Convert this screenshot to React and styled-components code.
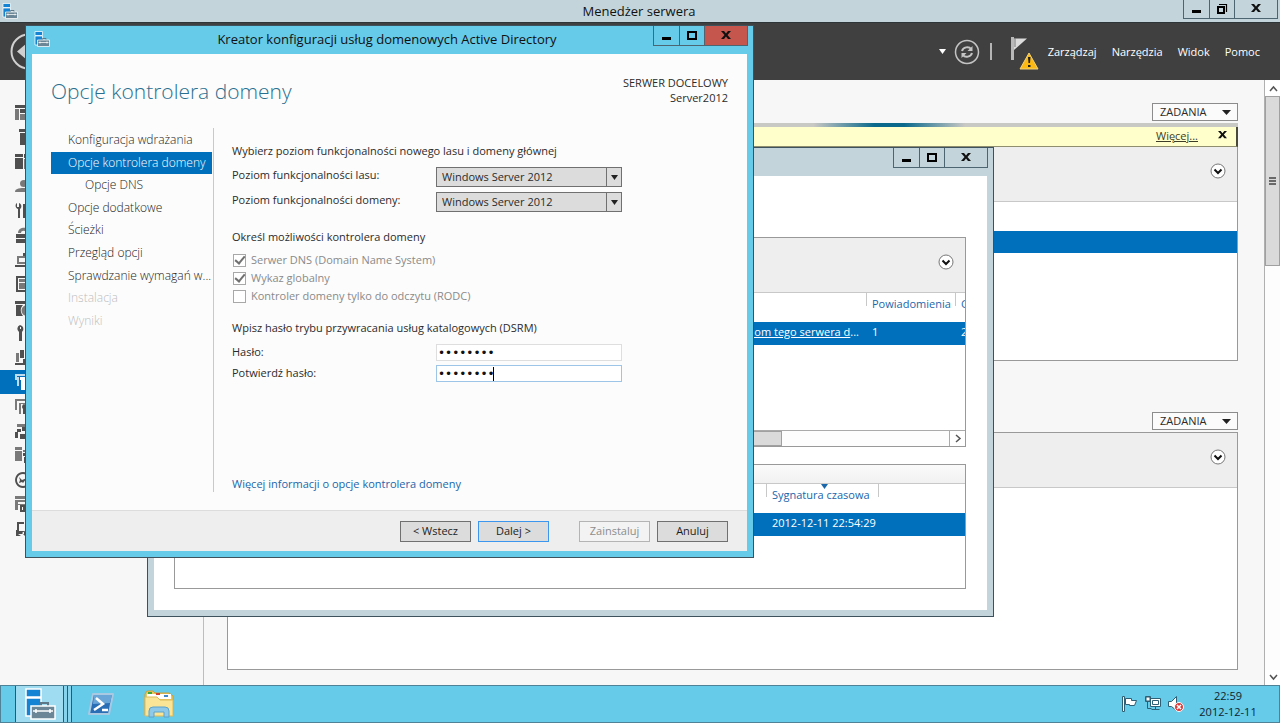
import React from "react"
import styled, { createGlobalStyle, css } from "styled-components"

const GlobalStyle = createGlobalStyle`
  * {
    box-sizing: border-box;
  }
  body {
    margin: 0;
    font-family: "Open Sans", "Noto Sans", sans-serif;
    font-size: 11px;
    line-height: 16px;
    color: #2b2b2b;
    overflow: hidden;
  }
  button, input, select {
    font: inherit;
    color: inherit;
    margin: 0;
  }
  h1, h2, p, ul {
    margin: 0;
    padding: 0;
    font-weight: 400;
  }
`

const Desktop = styled.div`
  position: relative;
  height: 100vh;
  display: flex;
  flex-direction: column;
  overflow: hidden;
  background: #f7f7f7;
`

const Manager = styled.main`
  flex: 1;
  min-height: 0;
  display: flex;
  flex-direction: column;
`

const TitleBar = styled.header`
  display: grid;
  grid-template-columns: 1fr auto 1fr;
  align-items: start;
  flex: none;
  height: ${props => props.$height};
  padding-right: ${props => props.$right || "0"};
  background: ${props => props.$color};
`

const TitleText = styled.h1`
  font-size: 13px;
  line-height: ${props => props.$line || "22px"};
  color: #111;
`

const TitleIcon = styled.span`
  padding: ${props => props.$pad};
  line-height: 0;
`

const Controls = styled.div`
  justify-self: end;
  display: flex;
  height: ${props => props.$height || "20px"};
  border: 1px solid #4c6570;
  border-top: 0;
`

const ControlButton = styled.button`
  width: ${props => (props.$wide ? "43px" : "25px")};
  padding: 0;
  border: 0;
  border-left: 1px solid #4c6570;
  background: ${props => props.$color || "transparent"};
  line-height: 0;
  &:first-child {
    border-left: 0;
  }
`

const Toolbar = styled.div`
  flex: none;
  height: 58px;
  display: flex;
  align-items: center;
  justify-content: space-between;
  padding: 0 20px 0 10px;
  background: #404040;
  border-top: 1px solid #2e3538;
`

const ToolbarGroup = styled.div`
  display: flex;
  align-items: center;
  gap: 9px;
`

const Menu = styled.nav`
  display: flex;
  gap: 15px;
`

const ToolbarIcons = styled.div`
  display: flex;
  align-items: center;
  height: 58px;
`

const IconButton = styled.button`
  padding: 0;
  border: 0;
  background: none;
  line-height: 0;
  margin-left: ${props => props.$gap || "0"};
`

const Divider = styled.span`
  width: 2px;
  height: 17px;
  margin-left: 10px;
  background: #b5b5b5;
`

const MenuLink = styled.a`
  color: #fff;
  font-weight: 500;
  text-decoration: none;
`

const Body = styled.div`
  flex: 1;
  min-height: 0;
  display: flex;
`

const Sidebar = styled.nav`
  flex: none;
  width: 204px;
  padding-top: 20px;
  border-right: 1px solid #bdbdbd;
`

const SideList = styled.ul`
  display: grid;
  grid-template-rows: repeat(18, 1fr);
  height: 441px;
  list-style: none;
`

const SideItem = styled.li`
  display: flex;
  align-items: center;
  padding-left: 15px;
  color: ${props => (props.$selected ? "#fff" : "#4f4f4f")};
  background: ${props => (props.$selected ? "#0070bc" : "transparent")};
`

const Content = styled.div`
  flex: 1;
  min-width: 0;
  padding: 23px 26px 15px 23px;
  display: flex;
  flex-direction: column;
`

const TasksButton = styled.button`
  flex: none;
  align-self: flex-end;
  width: 86px;
  height: 18px;
  padding: 0 6px 0 7px;
  display: flex;
  align-items: center;
  justify-content: space-between;
  border: 1px solid #8c8c8c;
  background: #fbfbfb;
  margin-bottom: 2px;
`

const Glow = styled.div`
  flex: none;
  height: 4px;
  background: linear-gradient(
    90deg,
    #c8c8c4 58%,
    #0b6a8c 64%,
    #0b6a8c 67%,
    #c8c8c4 73%
  );
`

const Notice = styled.div`
  flex: none;
  height: 20px;
  display: flex;
  align-items: center;
  justify-content: flex-end;
  gap: 20px;
  padding: 0 9px 2px 0;
  background: #ffffcc;
  border-right: 2px solid #4a4a3a;
  border-bottom: 1px solid #8f8f70;
  a {
    color: #3c3c28;
  }
`

const Panel = styled.section`
  display: flex;
  flex-direction: column;
  flex: ${props => props.$flex || "none"};
  height: ${props => props.$height || "auto"};
  margin-bottom: ${props => props.$gap || "0"};
  background: #fff;
  border: 1px solid #999;
  border-top: ${props => (props.$open ? "0" : "1px solid #999")};
`

const PanelHead = styled.div`
  flex: none;
  height: ${props => props.$height || "55px"};
  padding: 16px 11px 0 0;
  display: flex;
  align-items: flex-start;
  justify-content: flex-end;
  background: ${props => (props.$fade ? "linear-gradient(#fafafa, #f1f1f1)" : "#eee")};
  border-bottom: 1px solid #c8c8c8;
`

const PanelRow = styled.div`
  height: 22px;
  margin-top: 29px;
  background: #0070bc;
`

const ScrollBar = styled.div`
  flex: none;
  display: flex;
  flex-direction: ${props => (props.$horizontal ? "row" : "column")};
  ${props =>
    props.$horizontal
      ? css`
          height: 16px;
          border-top: 1px solid #aaa;
        `
      : css`
          width: 16px;
          padding-top: 1px;
        `}
  background: #fdfdfd;
  border-left: 1px solid #b0b0b0;
`

const ScrollButton = styled.button`
  flex: none;
  width: 16px;
  height: 15px;
  padding: 0;
  border: 0;
  line-height: 0;
  background: #fff;
  border-left: ${props => (props.$edge ? "1px solid #aaa" : "0")};
`

const Thumb = styled.div`
  flex: none;
  display: flex;
  align-items: center;
  justify-content: center;
  width: ${props => props.$width || "auto"};
  height: ${props => props.$height || "auto"};
  background: #dadada;
  border: 1px solid #a0a0a0;
`

const Fill = styled.span`
  flex: 1;
`

const Frame = styled.section`
  position: absolute;
  left: ${props => props.$left};
  top: ${props => props.$top};
  width: ${props => props.$width};
  height: ${props => props.$height};
  display: flex;
  flex-direction: column;
  background: ${props => props.$color};
  border: 1px solid #3d525c;
`

const FrameBody = styled.div`
  flex: 1;
  min-height: 0;
  margin: 0 6px 6px;
  display: flex;
  flex-direction: column;
  background: ${props => props.$color || "#fff"};
  padding: ${props => props.$pad || "0"};
`

const DataTable = styled.table`
  width: 100%;
  table-layout: fixed;
  border-collapse: collapse;
  th {
    height: 29px;
    padding: 3px 0 0 6px;
    text-align: left;
    vertical-align: top;
    font-weight: 400;
    color: #1a66ab;
    white-space: nowrap;
    overflow: hidden;
    background: linear-gradient(#c8c8c8, #c8c8c8) 0 0 / 1px 13px no-repeat;
  }
  td {
    height: 23px;
    padding: 0 0 3px 6px;
    color: #fff;
    white-space: nowrap;
    overflow: hidden;
    background: #0070bc;
  }
  td a {
    color: #fff;
  }
`

const LinkCell = styled.td`
  && {
    text-align: right;
    padding-right: 7px;
  }
`

const SortHead = styled.span`
  position: relative;
  svg {
    position: absolute;
    top: -3px;
    left: 50%;
  }
`

const WizardHead = styled.div`
  display: flex;
  justify-content: space-between;
  padding: 21px 19px 0 19px;
  height: 74px;
`

const WizardTitle = styled.h2`
  font-family: "Open Sans", sans-serif;
  font-size: 21px;
  line-height: 32px;
  font-weight: 300;
  color: #2b6f8f;
`

const Target = styled.p`
  line-height: 15px;
  text-align: right;
`

const WizardMain = styled.div`
  flex: 1;
  min-height: 0;
  display: flex;
  padding: 0 19px 18px;
`

const Steps = styled.ul`
  flex: none;
  width: 163px;
  border-right: 1px solid #c9c9c9;
  list-style: none;
  display: grid;
  grid-template-rows: repeat(9, 1fr);
  align-content: start;
  && {
    padding: 1px 1px 160px 0;
  }
`

const Step = styled.li`
  display: flex;
  align-items: center;
  padding-left: ${props => (props.$nested ? "34px" : "17px")};
  white-space: nowrap;
  font-size: 12px;
  font-weight: 300;
  color: ${props => (props.$disabled ? "#bdbdbd" : "#222")};
  ${props =>
    props.$selected &&
    css`
      color: #fff;
      background: #0070bc;
    `}
`

const Form = styled.form`
  flex: 1;
  display: flex;
  flex-direction: column;
  align-items: flex-start;
  padding: 15px 0 0 18px;
`

const Group = styled.div`
  display: grid;
  grid-template-columns: 204px 186px;
  row-gap: ${props => props.$gap};
  margin: ${props => props.$margin};
`

const SelectBox = styled.span`
  position: relative;
  display: block;
  height: 20px;
  svg {
    position: absolute;
    right: 4px;
    top: 8px;
    pointer-events: none;
  }
`

const Select = styled.select`
  appearance: none;
  display: block;
  width: 186px;
  height: 20px;
  padding: 0 5px;
  border: 1px solid #707070;
  border-radius: 0;
  background: linear-gradient(#707070, #707070) right 14px top / 1px 100%
    no-repeat #dcdcdc;
`

const Password = styled.input`
  display: block;
  width: 186px;
  height: 17px;
  padding: 0 1px;
  font-family: "DejaVu Sans", sans-serif;
  font-size: 12px;
  color: #111;
  border: 1px solid ${props => (props.$active ? "#9cc5e8" : "#dedede")};
  background: #fff;
  outline: 0;
`

const PasswordBox = styled.span`
  position: relative;
`

const Caret = styled.span`
  position: absolute;
  left: 57px;
  top: 2px;
  width: 1px;
  height: 14px;
  background: #000;
`

const CheckLabel = styled.label`
  display: flex;
  align-items: center;
  gap: 5px;
  height: 18px;
  color: #8a8a8a;
`

const CheckBox = styled.input`
  appearance: none;
  width: 13px;
  height: 13px;
  border: 1px solid #a8a8a8;
  background: #fff;
  display: grid;
  place-items: center;
  &:checked::after {
    content: "";
    width: 4px;
    height: 8px;
    margin-top: -2px;
    border: solid #707070;
    border-width: 0 2px 2px 0;
    rotate: 40deg;
  }
`

const CheckGroup = styled.div`
  margin: 6px 0 15px 1px;
`

const InfoLink = styled.a`
  margin-top: auto;
  color: #1a66ab;
  text-decoration: none;
`

const WizardFoot = styled.footer`
  flex: none;
  height: 41px;
  display: flex;
  align-items: center;
  justify-content: flex-end;
  gap: 7px;
  padding-right: 19px;
  background: #eee;
  border-top: 1px solid #dcdcdc;
`

const PushButton = styled.button`
  width: 71px;
  height: 21px;
  padding: 0;
  color: ${props => (props.disabled ? "#8d8d8d" : "#1c1c1c")};
  background: ${props => (props.disabled ? "#f3f3f3" : "#dcdcdc")};
  border: 1px solid
    ${props => (props.$primary ? "#3c96ee" : props.disabled ? "#b4b4b4" : "#707070")};
  margin-right: ${props => (props.$primary ? "23px" : "0")};
`

const TaskBar = styled.footer`
  flex: none;
  height: 38px;
  display: flex;
  align-items: stretch;
  background: #66cae9;
  border: 1px solid #4f8297;
`

const TaskButton = styled.button`
  width: ${props => (props.$running ? "49px" : "58px")};
  padding: 0;
  border: 0;
  line-height: 0;
  background: none;
  ${props =>
    props.$running &&
    css`
      margin-left: 14px;
      background: #9fdcf1;
      border: 1px solid #2c5a6c;
      border-width: 0 1px;
    `}
`

const Stack = styled.span`
  width: 4px;
  border-right: 1px solid #2c5a6c;
  background: #86d3ee;
`

const Tray = styled.div`
  margin-left: auto;
  display: flex;
  align-items: center;
  gap: 7px;
`

const Clock = styled.time`
  width: 88px;
  text-align: center;
  color: #10242c;
  padding-right: 14px;
`

const ServerIcon = ({ size = 16 }) => (
  <svg width={size} height={size} viewBox="0 0 32 32">
    <path d="M2 1h15v8H2zM2 10h15v18H2z" fill="#1583d3" stroke="#fff" strokeWidth="1.5" />
    <path d="M17 18v-3h7v3" fill="none" stroke="#5f7887" strokeWidth="2" />
    <path d="M7 18h24v13H7z" fill="#6b8797" stroke="#fff" strokeWidth="1.5" />
    <path d="M9 23h20M12 21v4M26 21v4" stroke="#fff" strokeWidth="1.5" />
  </svg>
)

const Minimise = () => (
  <svg width="10" height="12">
    <path d="M0 7h9v3H0z" />
  </svg>
)

const Maximise = () => (
  <svg width="10" height="10">
    <path d="M1 1h8v7H1z" fill="none" stroke="#000" strokeWidth="2" />
  </svg>
)

const Restore = () => (
  <svg width="12" height="12" fill="none" stroke="#000">
    <path d="M2 4h6v6H2z" strokeWidth="2" />
    <path d="M3 1.500h7.500v7.500" strokeWidth="1.200" />
  </svg>
)

const Close = ({ size = 10 }) => (
  <svg width={size} height={size} viewBox="0 0 10 10">
    <path d="M0 0h3l2 2.500L7 0h3L6.500 4 10 8H7L5 5.500 3 8H0l3.500-4z" fill="#111" />
  </svg>
)

const Triangle = ({ size = 9, color = "#222" }) => (
  <svg width={size} height="5" viewBox="0 0 10 5" preserveAspectRatio="none">
    <path d="M0 0h10L5 5z" fill={color} />
  </svg>
)

const Expander = () => (
  <svg width="16" height="16">
    <circle cx="8" cy="8" r="7" fill="#fff" stroke="#777" />
    <path d="M4.500 6.500 8 10l3.500-3.500" fill="none" stroke="#111" strokeWidth="2" />
  </svg>
)

const chevrons = { up: "M1 7l3.500-4L8 7", down: "M1 2l3.500 4L8 2", right: "M3 1l4 3.500L3 8" }

const Chevron = ({ to }) => (
  <svg width="9" height="9">
    <path d={chevrons[to]} fill="none" stroke="#555" strokeWidth="1.500" />
  </svg>
)

const BackIcon = () => (
  <svg width="37" height="37">
    <circle cx="18.500" cy="18.500" r="17" fill="none" stroke="#d0d0d0" strokeWidth="2" />
    <path d="M7 18.500 17 10v5h13v7H17v5z" fill="#d0d0d0" />
  </svg>
)

const RefreshIcon = () => (
  <svg width="26" height="26" fill="none" stroke="#c4c4c4">
    <circle cx="13" cy="13" r="11.500" strokeWidth="1.500" />
    <path d="M8 12c1-4 7-5 9-2M18 14c-1 4-7 5-9 2" strokeWidth="2" />
    <path d="M18.500 7v5h-5zM7.500 19v-5h5z" fill="#c4c4c4" stroke="none" />
  </svg>
)

const FlagIcon = () => (
  <svg width="28" height="38">
    <path d="M0 4h3v23H0z" fill="#b9b9b9" />
    <path d="M3 5.500h13L3 17z" fill="#dcdcdc" />
    <path d="M4 5v9" stroke="#777" />
    <path d="M18 20 27 36H9z" fill="#fdb913" stroke="#f3d27a" strokeLinejoin="round" />
    <path d="M17 24h2.500l-.5 6h-1.500zM17 32h2.500v2H17z" fill="#222" />
  </svg>
)

// dark strokes first, then the lighter fill
const sideIcons = [
  ["M0 1h18v3H0zM5 5h13v4H5z", "M0 5h4v11H0zM5 10h5v6H5zM11 10h7v6h-7z"],
  ["M4 0h13v3H4zM5 4h12v12H5z"],
  ["M0 1h8v3H0zM0 5h8v11H0zM9 1h8v4H9z", "M9 6h8v10H9z"],
  ["", "M9 2a4 3.500 0 1 1 0 7 4 3.500 0 0 1 0-7M0 14c0-3 3-4 9-4s9 1 9 4z"],
  ["M2 1v4h2V1c3 1 3 5 1 6v9H3V7C0 6 0 2 2 1M8 2h3v14H8z"],
  ["M1 7h16v4H1zM1 12h16v4H1z", "M3 6c0-7 12-7 12 0h-3c-1-3-6-3-6 0z"],
  ["M0 14h17v2H0zM8 2h3v3H8zM12 0h3v5h-3z", "M2 5h11v8H2zM4 7v4h7V7z"],
  ["M1 0h15v16H1zM3 2v12h11V2z", "M4 3h9v3H4zM4 7h9v6H4z"],
  ["M0 1h12v3H0zM1 5h7c-3 3-3 7 0 11H1z", "M12 5a5.500 5.500 0 1 0 .1 0M11 8v3h3V8z"],
  ["M5 0a4 4 0 0 1 2 7v9H4V7a4 4 0 0 1 1-7M5 2v2h1V2z"],
  ["M5 1h4v8H5zM8 10h8v4H8zM0 14h16v2H0z", "M1 4h3v9H1z"],
  ["M5 3h6v2h6v11H6V6H5z", "M0 0h10v2H2v4H0zM2 3h2v9H2z"],
  ["M9 6a3 3 0 0 1 1 5v5H8v-5a3 3 0 0 1 1-5", "M0 1h15v2H2v9H0zM4 5h11v1H6v10H4z"],
  ["M7 4h10v4H7zM2 6h4v3H3v6H0V9h2zM5 11h12v5H5z", "M2 1h10v3H2z"],
  ["M8 6h8v3H8zM9 10h7v6H9z", "M0 0h7v3H0zM0 4h7v10H0zM8 3h6v2H8z"],
  ["M8 0a8 8 0 1 0 .1 0M8 2a6 6 0 1 1-.1 0M4 5l3 3 5-2-4 5-1-1-3 1 1-3z"],
  ["M5 9h10v7H5zM7 11v3h1v-3zM10 11v3h1v-3z", "M0 0h14v3H0zM0 4h14v2H3v2h9v1H3v5H0z"],
  ["M2 1h7v2H4v7h5v3H3l3 2H1v-6h1zM10 5h5v8h-4v3l-4-4 4-3v2h2V7h-3z"],
]

const WindowControls = ({ height, restore, closeColor }) => (
  <Controls $height={height}>
    <ControlButton aria-label="Minimalizuj">
      <Minimise />
    </ControlButton>
    <ControlButton aria-label="Maksymalizuj">
      {restore ? <Restore /> : <Maximise />}
    </ControlButton>
    <ControlButton $wide $color={closeColor} aria-label="Zamknij">
      <Close />
    </ControlButton>
  </Controls>
)

const Tasks = () => (
  <TasksButton>
    ZADANIA
    <Triangle size={9} />
  </TasksButton>
)

const ServerManager = () => (
  <Manager>
    <TitleBar $height="22px" $right="2px" $color="#c3d5db">
      <TitleIcon $pad="3px 0 0 2px">
        <ServerIcon />
      </TitleIcon>
      <TitleText>Menedżer serwera</TitleText>
      <WindowControls height="19px" restore />
    </TitleBar>
    <Toolbar>
      <IconButton aria-label="Wstecz">
        <BackIcon />
      </IconButton>
      <ToolbarGroup>
        <ToolbarIcons>
          <Triangle size={7} color="#fff" />
          <IconButton $gap="8px" aria-label="Odśwież">
            <RefreshIcon />
          </IconButton>
          <Divider />
          <IconButton $gap="19px" aria-label="Powiadomienia">
            <FlagIcon />
          </IconButton>
        </ToolbarIcons>
        <Menu>
          {["Zarządzaj", "Narzędzia", "Widok", "Pomoc"].map(item => (
            <MenuLink href="#" key={item}>
              {item}
            </MenuLink>
          ))}
        </Menu>
      </ToolbarGroup>
    </Toolbar>
    <Body>
      <Sidebar>
        <SideList>
          {sideIcons.map(([dark, light], i) => (
            <SideItem key={i} $selected={i === 11}>
              <svg width="18" height="16" fill="currentColor" fillRule="evenodd">
                <path d={light} opacity="0.75" />
                <path d={dark} />
              </svg>
            </SideItem>
          ))}
        </SideList>
      </Sidebar>
      <Content>
        <Tasks />
        <Glow />
        <Notice>
          <a href="#">Więcej...</a>
          <IconButton aria-label="Zamknij">
            <Close size={9} />
          </IconButton>
        </Notice>
        <Panel $height="214px" $gap="51px" $open>
          <PanelHead>
            <Expander />
          </PanelHead>
          <PanelRow />
        </Panel>
        <Tasks />
        <Panel $flex="1">
          <PanelHead>
            <Expander />
          </PanelHead>
        </Panel>
      </Content>
      <ScrollBar>
        <ScrollButton aria-label="W górę">
          <Chevron to="up" />
        </ScrollButton>
        <Thumb $height="170px">
          <svg width="8" height="8">
            <path d="M0 1h7M0 4h7M0 7h7" stroke="#444" strokeWidth="1.500" />
          </svg>
        </Thumb>
        <Fill />
        <ScrollButton aria-label="W dół">
          <Chevron to="down" />
        </ScrollButton>
      </ScrollBar>
    </Body>
  </Manager>
)

const TaskDetails = () => (
  <Frame $left="147px" $top="147px" $width="847px" $height="470px" $color="#c3d5db">
    <TitleBar $height="28px" $right="5px">
      <span />
      <span />
      <WindowControls />
    </TitleBar>
    <FrameBody $pad="61px 21px 21px 20px">
      <Panel $height="210px" $gap="17px">
        <PanelHead>
          <Expander />
        </PanelHead>
        <DataTable>
          <colgroup>
            <col />
            <col width="89" />
            <col width="10" />
          </colgroup>
          <thead>
            <tr>
              <th />
              <th>Powiadomienia</th>
              <th>Godzina</th>
            </tr>
          </thead>
          <tbody>
            <tr>
              <LinkCell>
                <a href="#">Podnieś poziom tego serwera d</a>...
              </LinkCell>
              <td>1</td>
              <td>2012-12-11</td>
            </tr>
          </tbody>
        </DataTable>
        <Fill />
        <ScrollBar $horizontal>
          <Thumb $width="606px" />
          <Fill />
          <ScrollButton $edge aria-label="W prawo">
            <Chevron to="right" />
          </ScrollButton>
        </ScrollBar>
      </Panel>
      <Panel $flex="1">
        <PanelHead $height="19px" $fade />
        <DataTable>
          <colgroup>
            <col />
            <col width="112" />
            <col width="87" />
          </colgroup>
          <thead>
            <tr>
              <th />
              <th>
                <SortHead>
                  Sygnatura czasowa
                  <Triangle size={7} color="#1a66ab" />
                </SortHead>
              </th>
              <th />
            </tr>
          </thead>
          <tbody>
            <tr>
              <td />
              <td>2012-12-11 22:54:29</td>
              <td />
            </tr>
          </tbody>
        </DataTable>
      </Panel>
    </FrameBody>
  </Frame>
)

const steps = [
  { name: "Konfiguracja wdrażania" },
  { name: "Opcje kontrolera domeny", selected: true },
  { name: "Opcje DNS", nested: true },
  { name: "Opcje dodatkowe" },
  { name: "Ścieżki" },
  { name: "Przegląd opcji" },
  { name: "Sprawdzanie wymagań w..." },
  { name: "Instalacja", disabled: true },
  { name: "Wyniki", disabled: true },
]

const LevelSelect = ({ id, label }) => (
  <>
    <label htmlFor={id}>{label}</label>
    <SelectBox>
      <Select id={id}>
        <option>Windows Server 2012</option>
      </Select>
      <Triangle size={7} />
    </SelectBox>
  </>
)

const Check = ({ label, checked }) => (
  <CheckLabel>
    <CheckBox type="checkbox" defaultChecked={checked} disabled />
    {label}
  </CheckLabel>
)

const Wizard = () => (
  <Frame $left="25px" $top="25px" $width="729px" $height="533px" $color="#66cae9">
    <TitleBar $height="28px" $right="5px">
      <TitleIcon $pad="5px 0 0 8px">
        <ServerIcon />
      </TitleIcon>
      <TitleText $line="27px">
        Kreator konfiguracji usług domenowych Active Directory
      </TitleText>
      <WindowControls closeColor="#c4564d" />
    </TitleBar>
    <FrameBody $color="#fcfcfc">
      <WizardHead>
        <WizardTitle>Opcje kontrolera domeny</WizardTitle>
        <Target>
          SERWER DOCELOWY
          <br />
          Server2012
        </Target>
      </WizardHead>
      <WizardMain>
        <Steps>
          {steps.map(step => (
            <Step
              key={step.name}
              $selected={step.selected}
              $nested={step.nested}
              $disabled={step.disabled}
            >
              {step.name}
            </Step>
          ))}
        </Steps>
        <Form>
          <p>Wybierz poziom funkcjonalności nowego lasu i domeny głównej</p>
          <Group $gap="5px" $margin="8px 0 17px">
            <LevelSelect id="forest" label="Poziom funkcjonalności lasu:" />
            <LevelSelect id="domain" label="Poziom funkcjonalności domeny:" />
          </Group>
          <p>Określ możliwości kontrolera domeny</p>
          <CheckGroup>
            <Check label="Serwer DNS (Domain Name System)" checked />
            <Check label="Wykaz globalny" checked />
            <Check label="Kontroler domeny tylko do odczytu (RODC)" />
          </CheckGroup>
          <p>Wpisz hasło trybu przywracania usług katalogowych (DSRM)</p>
          <Group $gap="4px" $margin="8px 0 0">
            <label htmlFor="password">Hasło:</label>
            <Password id="password" type="password" defaultValue="password" />
            <label htmlFor="confirm">Potwierdź hasło:</label>
            <PasswordBox>
              <Password id="confirm" type="password" defaultValue="password" $active />
              <Caret />
            </PasswordBox>
          </Group>
          <InfoLink href="#">Więcej informacji o opcje kontrolera domeny</InfoLink>
        </Form>
      </WizardMain>
      <WizardFoot>
        <PushButton>&lt; Wstecz</PushButton>
        <PushButton $primary>Dalej &gt;</PushButton>
        <PushButton disabled>Zainstaluj</PushButton>
        <PushButton>Anuluj</PushButton>
      </WizardFoot>
    </FrameBody>
  </Frame>
)

const PowerShellIcon = () => (
  <svg width="28" height="24">
    <path d="M6 2h20l-4 20H2z" fill="#2a6fb5" stroke="#a9c9e2" strokeWidth="2" strokeLinejoin="round" />
    <path d="M7 3h18l-2 8-17 1z" fill="#6aa5d8" />
    <path d="M9 6l7 6-9 6M15 18h6" fill="none" stroke="#fff" strokeWidth="2.500" />
  </svg>
)

const ExplorerIcon = () => (
  <svg width="32" height="28">
    <path d="M2 4l2-3h6l2 2h14l4 3v19H2z" fill="#e9c95f" stroke="#c9a03c" />
    <path d="M4 4h24v5H4z" fill="#fff" />
    <path d="M5 2h4v2H5z" fill="#3aa53a" />
    <path d="M13 3h4v2h-4z" fill="#d1432d" />
    <path d="M21 5h4v2h-4z" fill="#3f87c9" />
    <path d="M2 7h12l3 3h13v16H2z" fill="#fae596" stroke="#dcb95a" />
    <path d="M6 27v-6q0-4 4-4h12q4 0 4 4v6h-5v-5H11v5z" fill="#8fc9ea" stroke="#5ba2cd" />
  </svg>
)

const TrayIcons = () => (
  <>
    <svg width="16" height="16" fill="#fff" stroke="#2e5f74">
      <path d="M.5.5h2v15h-2zM3.500 2.500h6v2h5l-2 5h-5v-1h-4z" />
    </svg>
    <svg width="16" height="16" fill="#fff" stroke="#2e5f74">
      <path d="M5.500 2.500h10v8h-10zM7.500 4.500h6v4h-6zM6.500 13.500h8M10.500 11v2" />
      <path d="M.5.5h5v5h-5zM2.500 6v6.500h4" fill="none" />
      <path d="M1 1h4v4H1z" />
    </svg>
    <svg width="16" height="16">
      <path d="M.5 5.500h3l5-5v14l-5-4h-3z" fill="#fff" stroke="#2e5f74" />
      <circle cx="11" cy="11" r="4.500" fill="#d93a3a" stroke="#fff" />
      <path d="M9 9l4 4M13 9l-4 4" stroke="#fff" strokeWidth="1.500" />
    </svg>
  </>
)

const App = () => (
  <>
    <GlobalStyle />
    <Desktop>
      <ServerManager />
      <TaskDetails />
      <Wizard />
      <TaskBar>
        <TaskButton $running aria-label="Menedżer serwera">
          <ServerIcon size={32} />
        </TaskButton>
        <Stack />
        <Stack />
        <TaskButton aria-label="Windows PowerShell">
          <PowerShellIcon />
        </TaskButton>
        <TaskButton aria-label="Eksplorator plików">
          <ExplorerIcon />
        </TaskButton>
        <Tray>
          <TrayIcons />
          <Clock>
            22:59
            <br />
            2012-12-11
          </Clock>
        </Tray>
      </TaskBar>
    </Desktop>
  </>
)

export default App
